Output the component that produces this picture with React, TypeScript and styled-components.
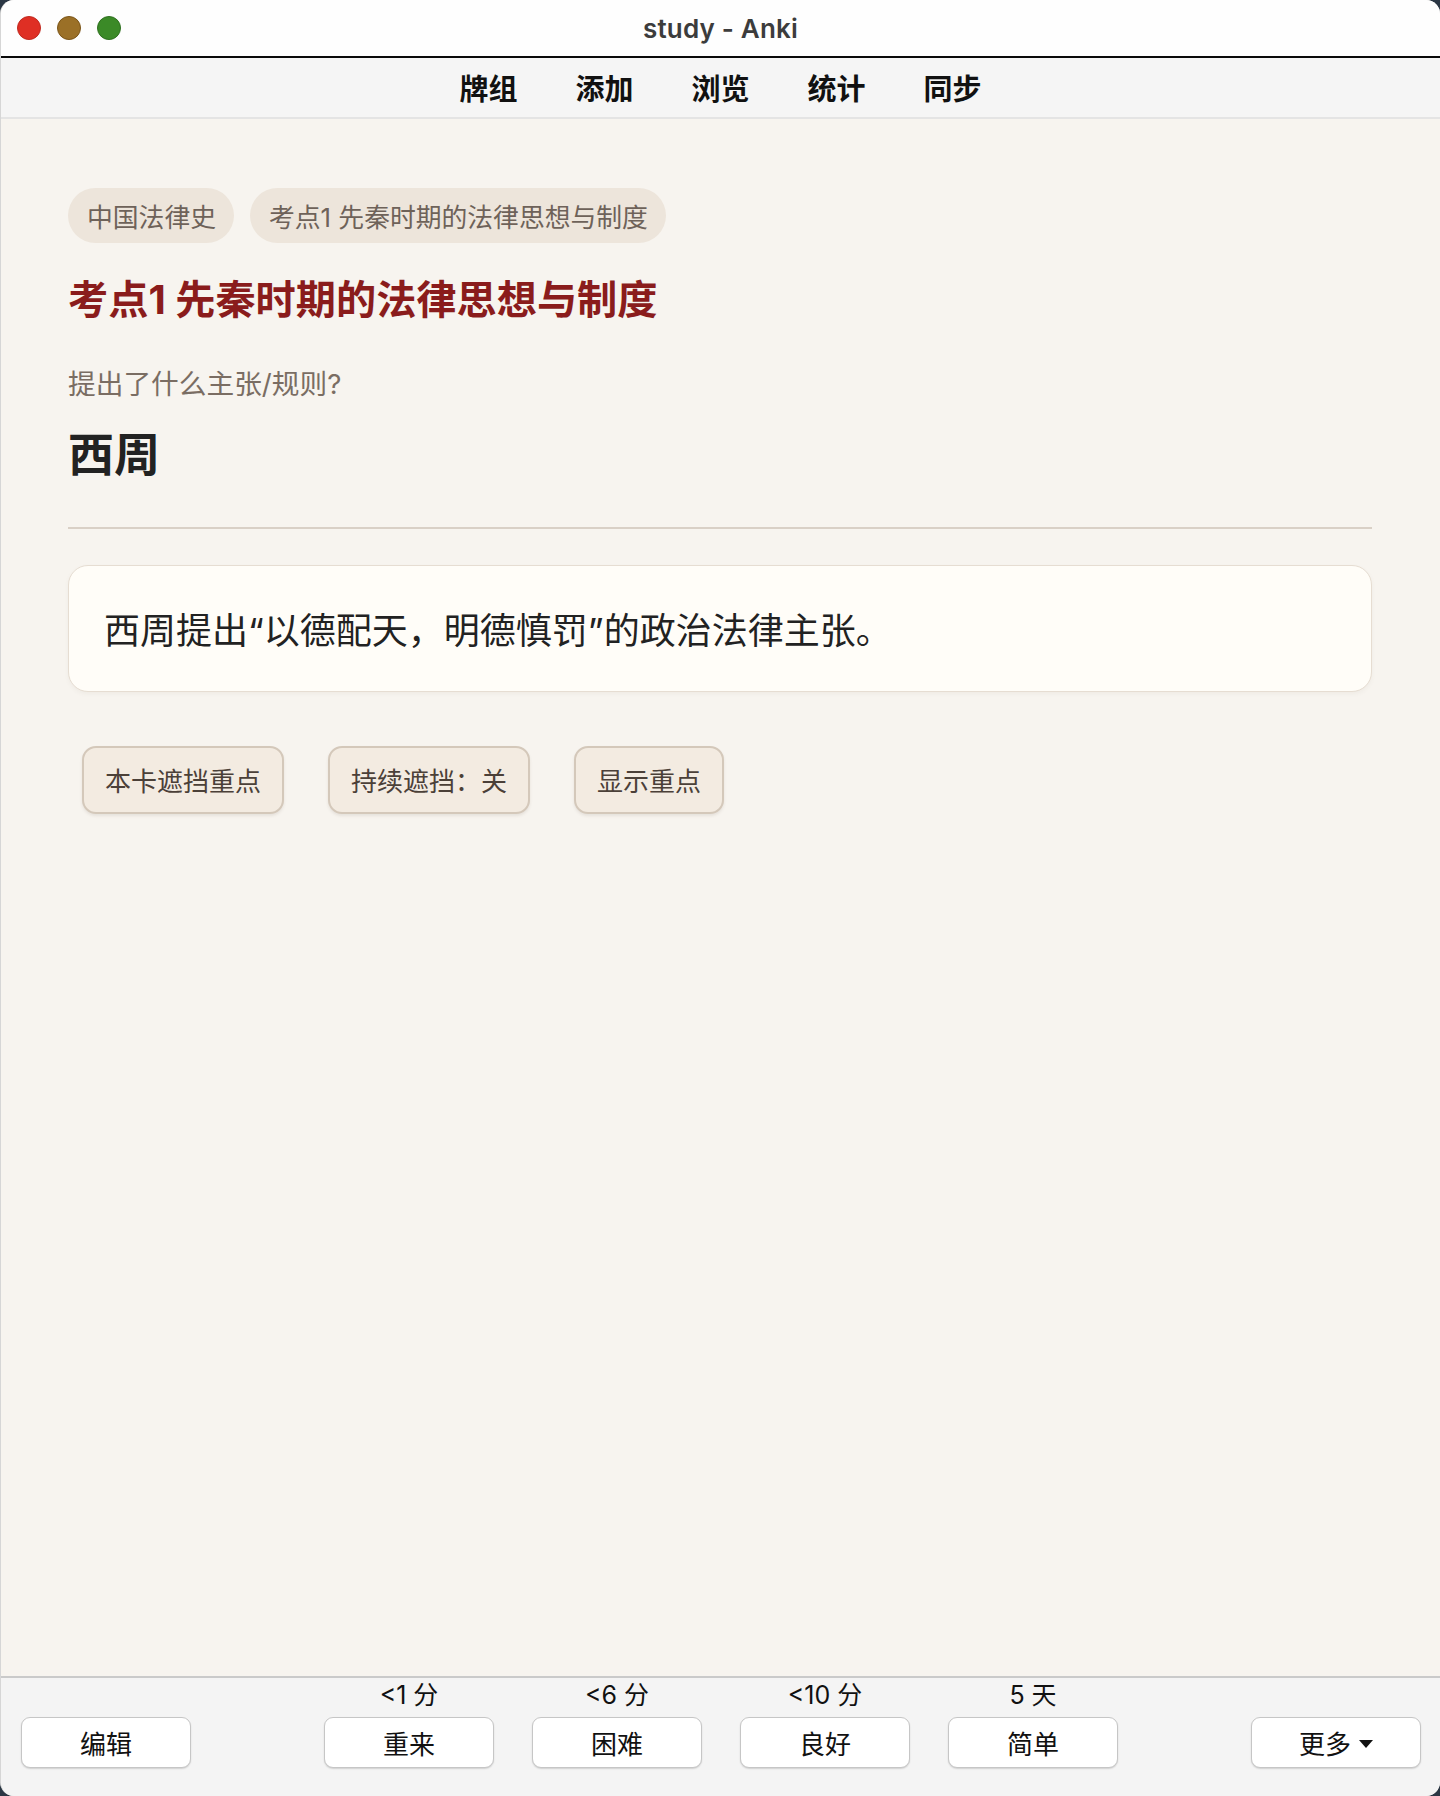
import React from "react";
import styled, { createGlobalStyle } from "styled-components";

const FONT = `"Inter", "Noto Sans CJK SC", "Noto Sans", sans-serif`;

const GlobalStyle = createGlobalStyle`
  html, body {
    margin: 0;
    padding: 0;
    background: #2b3744;
  }
  body {
    font-family: ${FONT};
    -webkit-font-smoothing: antialiased;
  }
  * {
    box-sizing: border-box;
  }
`;

const Window = styled.div`
  width: 1440px;
  height: 1796px;
  display: flex;
  flex-direction: column;
  border-radius: 14px;
  overflow: hidden;
  background: #f7f4ef;
  border-left: 1px solid #d6d6d6;
`;

const TitleBar = styled.header`
  height: 58px;
  flex-shrink: 0;
  display: grid;
  grid-template-columns: 1fr auto 1fr;
  align-items: center;
  background: #fefefe;
  border-bottom: 2px solid #0a0a0a;
  padding: 0 16px;
`;

const Lights = styled.div`
  display: flex;
  gap: 16px;
  align-items: center;
`;

const Light = styled.span<{ $fill: string; $edge: string }>`
  width: 24px;
  height: 24px;
  border-radius: 50%;
  background: ${(p) => p.$fill};
  border: 1px solid ${(p) => p.$edge};
`;

const WindowTitle = styled.h1`
  margin: 0;
  font-family: ${FONT};
  font-size: 26px;
  font-weight: 600;
  color: #3c3c3c;
  letter-spacing: 0.2px;
`;

const Toolbar = styled.nav`
  height: 61px;
  flex-shrink: 0;
  display: flex;
  justify-content: center;
  align-items: center;
  gap: 58px;
  background: #f5f5f5;
  border-bottom: 2px solid #e4e4e4;
  padding-bottom: 2px;
`;

const NavItem = styled.span`
  font-size: 29px;
  font-weight: 700;
  color: #111;
  cursor: pointer;
`;

const Content = styled.main`
  flex: 1;
  padding: 69px 68px 0 67px;
  display: flex;
  flex-direction: column;
`;

const TagRow = styled.div`
  display: flex;
  gap: 16px;
`;

const Tag = styled.span`
  height: 55px;
  display: inline-flex;
  align-items: center;
  padding: 0 18px 0 19px;
  border-radius: 28px;
  background: #ede5db;
  color: #6e6259;
  font-size: 25.8px;
`;

const DeckTitle = styled.h2`
  margin: 31px 0 0;
  font-size: 40.2px;
  line-height: 1.3;
  font-weight: 700;
  color: #8a1c1c;
`;

const Question = styled.p`
  margin: 39px 0 0;
  font-size: 27.7px;
  line-height: 1.4;
  color: #7a6d63;
`;

const Term = styled.div`
  margin-top: 21px;
  font-size: 46px;
  line-height: 1.3;
  font-weight: 700;
  color: #222;
`;

const Divider = styled.hr`
  margin: 42px 0 0;
  border: none;
  height: 2px;
  background: #d9d0c6;
`;

const AnswerBox = styled.div`
  margin-top: 36px;
  height: 127px;
  display: flex;
  align-items: center;
  padding: 0 35px;
  border-radius: 20px;
  background: #fffdf8;
  border: 1.5px solid #e6ddd2;
  box-shadow: 0 2px 4px rgba(120, 100, 80, 0.06);
  font-size: 36px;
  color: #222;
`;

const ActionRow = styled.div`
  margin-top: 54px;
  padding-left: 14px;
  display: flex;
  gap: 44px;
`;

const ActionButton = styled.button`
  height: 68px;
  padding: 0 21px;
  border-radius: 14px;
  background: #f3ebe1;
  border: 2px solid #d4c8ba;
  box-shadow: 0 2px 3px rgba(90, 70, 50, 0.1);
  font-family: ${FONT};
  font-size: 26px;
  color: #4b4038;
  cursor: pointer;
`;

const BottomBar = styled.footer`
  height: 120px;
  flex-shrink: 0;
  display: flex;
  justify-content: space-between;
  align-items: flex-end;
  padding: 0 19px 28px 20px;
  background: #f4f4f4;
  border-top: 2px solid #cacaca;
`;

const EaseGroup = styled.div`
  display: flex;
  gap: 38px;
`;

const EaseCol = styled.div`
  display: flex;
  flex-direction: column;
  align-items: center;
  gap: 7px;
`;

const EaseLabel = styled.span`
  font-size: 25px;
  line-height: 29px;
  color: #111;
`;

const BarButton = styled.button`
  width: 170px;
  height: 51px;
  display: inline-flex;
  justify-content: center;
  align-items: center;
  gap: 8px;
  border-radius: 9px;
  background: #fff;
  border: 1.5px solid #c6c6c6;
  box-shadow: 0 1px 1.5px rgba(0, 0, 0, 0.15);
  font-family: ${FONT};
  font-size: 26px;
  color: #111;
  cursor: pointer;
`;

const Caret = styled.span`
  width: 0;
  height: 0;
  border-left: 7px solid transparent;
  border-right: 7px solid transparent;
  border-top: 8px solid #111;
  margin-top: 3px;
`;

const nav = ["牌组", "添加", "浏览", "统计", "同步"];

const eases = [
  { time: "<1 分", label: "重来" },
  { time: "<6 分", label: "困难" },
  { time: "<10 分", label: "良好" },
  { time: "5 天", label: "简单" },
];

export default function App() {
  return (
    <>
      <GlobalStyle />
      <Window>
        <TitleBar>
          <Lights>
            <Light $fill="#df2f24" $edge="#c02a20" />
            <Light $fill="#9b7027" $edge="#7b5519" />
            <Light $fill="#3b8a27" $edge="#2f7020" />
          </Lights>
          <WindowTitle>study - Anki</WindowTitle>
          <span />
        </TitleBar>

        <Toolbar>
          {nav.map((n) => (
            <NavItem key={n}>{n}</NavItem>
          ))}
        </Toolbar>

        <Content>
          <TagRow>
            <Tag>中国法律史</Tag>
            <Tag>考点1 先秦时期的法律思想与制度</Tag>
          </TagRow>
          <DeckTitle>考点1 先秦时期的法律思想与制度</DeckTitle>
          <Question>提出了什么主张/规则?</Question>
          <Term>西周</Term>
          <Divider />
          <AnswerBox>西周提出“以德配天，明德慎罚”的政治法律主张。</AnswerBox>
          <ActionRow>
            <ActionButton>本卡遮挡重点</ActionButton>
            <ActionButton>持续遮挡：关</ActionButton>
            <ActionButton>显示重点</ActionButton>
          </ActionRow>
        </Content>

        <BottomBar>
          <BarButton>编辑</BarButton>
          <EaseGroup>
            {eases.map((e) => (
              <EaseCol key={e.label}>
                <EaseLabel>{e.time}</EaseLabel>
                <BarButton>{e.label}</BarButton>
              </EaseCol>
            ))}
          </EaseGroup>
          <BarButton>
            更多
            <Caret />
          </BarButton>
        </BottomBar>
      </Window>
    </>
  );
}
